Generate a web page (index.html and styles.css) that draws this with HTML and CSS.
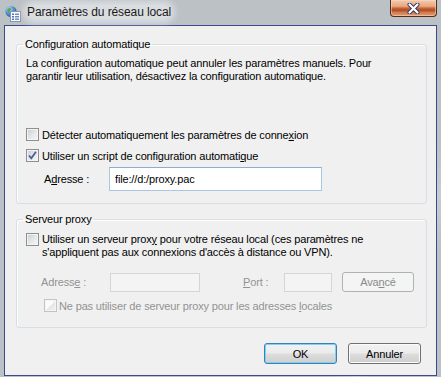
FILE: index.html
```html
<!DOCTYPE html>
<html lang="fr">
<head>
    <meta charset="UTF-8">
    <title>Paramètres du réseau local</title>
    <link rel="stylesheet" href="styles.css">
</head>
<body>
    <div class="window">
        <div class="titlebar">
            <svg class="app-icon" width="18" height="18" viewBox="0 0 18 18">
                <defs>
                    <radialGradient id="globe" cx="0.35" cy="0.3" r="0.8">
                        <stop offset="0" stop-color="#bfe0ff"/>
                        <stop offset="0.5" stop-color="#4f8fd8"/>
                        <stop offset="1" stop-color="#1d4f9c"/>
                    </radialGradient>
                </defs>
                <circle cx="7" cy="7.5" r="5.6" fill="url(#globe)"/>
                <path d="M3.5 5 q2 -1.5 3.5 -0.5 q0.5 1.5 -1 2 q-1 1 -0.5 2.5 q-1.5 0 -2 -1.5 z" fill="#5aa64a"/>
                <path d="M8.5 3 q2 0 3 1.5 q-1 0.5 -2.2 0 z" fill="#5aa64a"/>
                <rect x="6.5" y="7.5" width="10" height="10" fill="#fdfdfd" stroke="#8894a8"/>
                <rect x="8" y="9.5" width="2" height="1.5" fill="#3a78c8"/>
                <rect x="11" y="9.5" width="4" height="1.5" fill="#6a8fc0"/>
                <rect x="8" y="12" width="2" height="1.5" fill="#3a78c8"/>
                <rect x="11" y="12" width="4" height="1.5" fill="#6a8fc0"/>
                <rect x="8" y="14.5" width="2" height="1.5" fill="#3a78c8"/>
                <rect x="11" y="14.5" width="4" height="1.5" fill="#6a8fc0"/>
            </svg>
            <span class="title">Paramètres du réseau local</span>
            <div class="close">
                <svg width="13" height="11" viewBox="0 0 13 11">
                    <path d="M2.5 1.5 L10.5 9.5 M10.5 1.5 L2.5 9.5" stroke="#2c3766" stroke-width="4" stroke-linecap="round"/>
                    <path d="M2.5 1.5 L10.5 9.5 M10.5 1.5 L2.5 9.5" stroke="#ffffff" stroke-width="2.2" stroke-linecap="round"/>
                </svg>
            </div>
        </div>

        <div class="client">
            <fieldset class="group group-auto">
                <legend>Configuration automatique</legend>
                <p class="note">La configuration automatique peut annuler les paramètres manuels. Pour<br>garantir leur utilisation, désactivez la configuration automatique.</p>
                <label class="check-row first"><span class="check"></span><span>Détecter automatiquement les paramètres de conne<u>x</u>ion</span></label>
                <label class="check-row"><span class="check checked"><svg width="11" height="11" viewBox="0 0 11 11"><path d="M2 5.5 L4.3 8.3 L9 1.8" fill="none" stroke="#4b5f95" stroke-width="1.8"/></svg></span><span>Utiliser un script de configuration automati<u>q</u>ue</span></label>
                <div class="field-row">
                    <span class="field-label">A<u>d</u>resse :</span>
                    <input class="text-input script-url" type="text" value="file://d:/proxy.pac">
                </div>
            </fieldset>

            <fieldset class="group group-proxy">
                <legend>Serveur proxy</legend>
                <label class="check-row multi"><span class="check"></span><span>Utiliser un serveur prox<u>y</u> pour votre réseau local (ces paramètres ne<br>s'appliquent pas aux connexions d'accès à distance ou VPN).</span></label>
                <div class="proxy-row">
                    <span class="field-label dim">Adress<u>e</u> :</span>
                    <input class="text-input addr" type="text" disabled>
                    <span class="port-label dim"><u>P</u>ort :</span>
                    <input class="text-input port" type="text" disabled>
                    <button class="btn advanced" disabled>Ava<u>n</u>cé</button>
                </div>
                <label class="check-row bypass dim"><span class="check off"></span><span>Ne pas utiliser de serveur proxy pour les adresses <u>l</u>ocales</span></label>
            </fieldset>

            <div class="actions">
                <button class="btn default">OK</button>
                <button class="btn">Annuler</button>
            </div>
        </div>
    </div>
</body>
</html>
```

FILE: styles.css
```css
body {
    margin: 0;
    font-family: "Liberation Sans", Arial, sans-serif;
    font-size: 11px;
    letter-spacing: -0.15px;
    color: #000;
    background: #bcc1c6;
}
.window {
    width: 441px;
    height: 377px;
    background: linear-gradient(115deg, #bcc1c6 0%, #bcc1c6 82%, #c9cdd1 86%, #bcc1c6 90%);
}
.titlebar {
    height: 25px;
    display: flex;
    align-items: flex-start;
}
.app-icon {
    margin: 4px 0 0 4px;
    flex: none;
}
.title {
    margin: 5px 0 0 5px;
    font-size: 12px;
    line-height: 14px;
    letter-spacing: -0.1px;
    color: #1a1a1a;
    background: rgba(232, 234, 236, 0.7);
    border-radius: 7px;
    box-shadow: 0 0 6px 4px rgba(232, 234, 236, 0.7);
}
.close {
    margin-left: auto;
    margin-right: 4px;
    width: 47px;
    height: 17px;
    box-sizing: border-box;
    border: 1px solid #4e2f22;
    border-top: none;
    border-radius: 0 0 4px 4px;
    background: linear-gradient(#f3cbae 0%, #e7a77f 40%, #c8683a 50%, #ad4c20 64%, #d17c51 78%, #e29c72 100%);
    box-shadow: inset 0 0 0 1px rgba(255, 220, 200, 0.5);
    display: flex;
    align-items: center;
    justify-content: center;
}
.client {
    margin: 0 4px;
    height: 351px;
    box-sizing: border-box;
    border: 1px solid #3b4a8b;
    background: #f0f0f0;
    padding: 11px 9px 0 11px;
}
.group {
    margin: 0;
    padding: 6px 9px 12px 9px;
    border: 1px solid #d5dfe5;
    border-radius: 3px;
    box-shadow: inset 1px 1px 0 #fff;
    min-width: 0;
}
.group legend {
    margin-left: -3px;
    padding: 0 2px;
    line-height: 14px;
}
.group-proxy {
    margin-top: 8px;
    padding-top: 7px;
    padding-bottom: 15px;
}
.note {
    margin: 0;
    line-height: 13px;
}
.check-row {
    display: flex;
    align-items: center;
    gap: 3px;
    height: 21px;
}
.check-row.first {
    margin-top: 41px;
}
.check-row.multi {
    height: auto;
    align-items: flex-start;
    line-height: 13px;
}
.check-row.bypass {
    height: 13px;
    margin-top: 7px;
    padding-left: 18px;
    gap: 2px;
}
.check {
    flex: none;
    width: 13px;
    height: 13px;
    box-sizing: border-box;
    border: 1px solid #8e8f8f;
    background: linear-gradient(135deg, #c6cad0 0%, #e4e6e8 50%, #f7f7f7 100%);
    box-shadow: inset 0 0 0 1px #f4f4f4;
    display: flex;
    align-items: center;
    justify-content: center;
}
.check svg {
    display: block;
}
.check.off {
    border-color: #c4c4c4;
    background: linear-gradient(135deg, #fbfbfb 0%, #fbfbfb 48%, #e6e6e6 52%, #f2f2f2 100%);
}
.dim {
    color: #939393;
}
.field-row {
    display: flex;
    align-items: center;
    margin-top: 1px;
    height: 24px;
}
.field-label {
    margin-left: 18px;
    width: 65px;
    flex: none;
}
.text-input {
    box-sizing: border-box;
    margin: 0;
    padding: 0 0 0 5px;
    font: inherit;
    letter-spacing: inherit;
    color: #000;
    background: #fff;
    border: 1px solid #a9c6e2;
    border-top-color: #8bafd4;
    outline: none;
}
.script-url {
    width: 213px;
    height: 24px;
}
.proxy-row {
    display: flex;
    align-items: center;
    margin-top: 13px;
    height: 20px;
}
.proxy-row .field-label {
    margin-left: 15px;
    width: 69px;
}
.text-input[disabled] {
    background: #f4f4f4;
    border-color: #d5d5d5;
}
.addr {
    width: 90px;
    height: 19px;
}
.port-label {
    margin-left: 43px;
    width: 41px;
    flex: none;
}
.port {
    width: 48px;
    height: 19px;
}
.btn {
    box-sizing: border-box;
    width: 73px;
    height: 21px;
    padding: 0;
    font: inherit;
    letter-spacing: inherit;
    color: #000;
    border: 1px solid #707070;
    border-radius: 3px;
    background: linear-gradient(#f2f2f2 0%, #ebebeb 48%, #dddddd 52%, #cfcfcf 100%);
    box-shadow: inset 0 0 0 1px #fbfbfb;
}
.btn.default {
    border-color: #3c7fb1;
    box-shadow: inset 0 0 0 1px #7fd0f5;
}
.btn.advanced {
    width: 72px;
    height: 20px;
    margin-left: 10px;
    color: #8a8a8a;
    border-color: #adb2b5;
    background: #f4f4f4;
    box-shadow: none;
}
.actions {
    display: flex;
    justify-content: flex-end;
    gap: 11px;
    margin-top: 15px;
    padding-right: 6px;
}
```
